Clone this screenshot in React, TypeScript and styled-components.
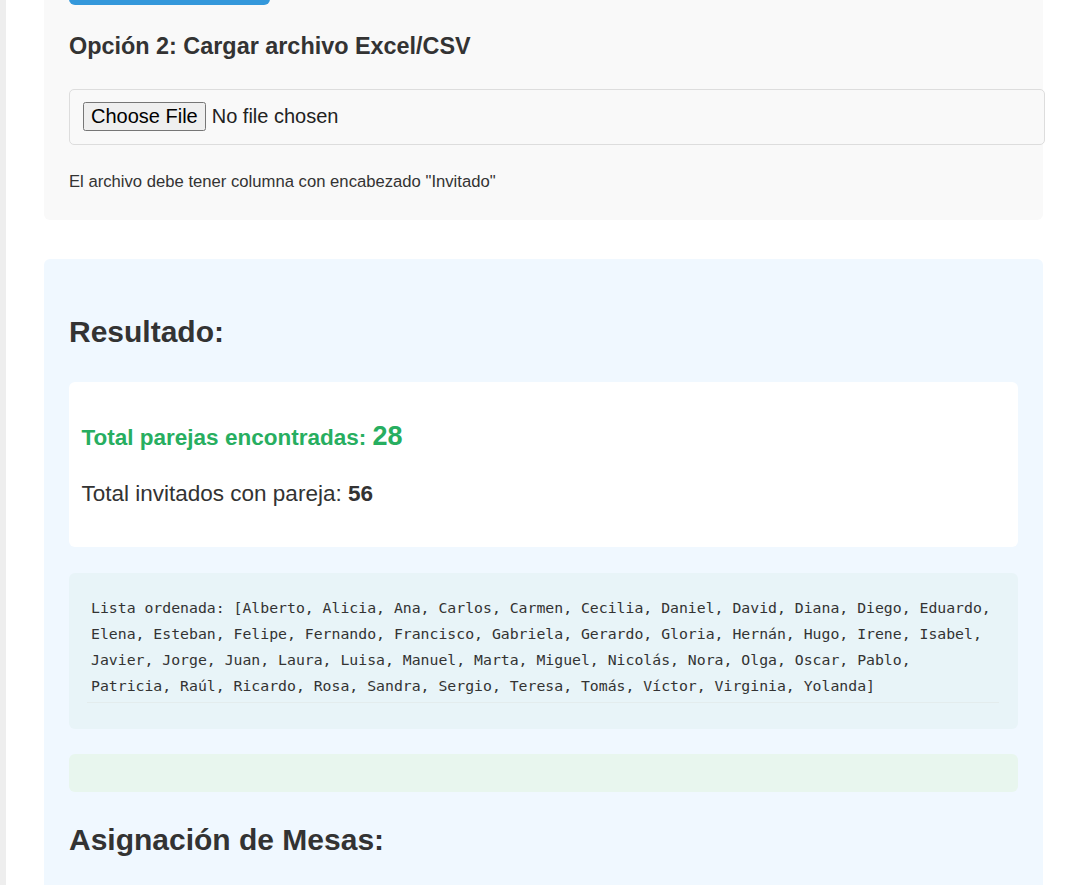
import React from "react";
import styled, { createGlobalStyle } from "styled-components";

const GlobalStyle = createGlobalStyle`
  html, body {
    margin: 0;
    padding: 0;
    background: #eeeeee;
    overflow: hidden;
  }
  body {
    font-family: "Liberation Sans", Arial, sans-serif;
    color: #333333;
  }
  * { box-sizing: content-box; }
`;

const Viewport = styled.div`
  width: 1065px;
  height: 885px;
  overflow: hidden;
  display: flex;
  padding-left: 6px;
  box-sizing: border-box;
`;

const Container = styled.main`
  flex: 1;
  background: #ffffff;
  padding: 0 22px 0 38px;
  margin-top: -65.5px;
  display: flex;
  flex-direction: column;
  gap: 39px;
  min-height: 1000px;
`;

const Panel = styled.section<{ $tone: "gray" | "blue" }>`
  background: ${(p) => (p.$tone === "gray" ? "#f9f9f9" : "#f0f8ff")};
  border-radius: 6px;
  padding: 25px;
  display: flex;
  flex-direction: column;
  align-items: flex-start;
`;

const PrimaryButton = styled.button`
  box-sizing: border-box;
  width: 201px;
  height: 45px;
  border: none;
  border-radius: 6px;
  background: #3498db;
  color: #ffffff;
  font-family: "Liberation Sans", Arial, sans-serif;
  font-size: 18px;
  line-height: 20px;
  padding: 0 0 25px;
  display: flex;
  align-items: flex-start;
  justify-content: center;
  overflow: hidden;
`;

const SectionTitle = styled.h3`
  margin: 28.9px 0 28.7px;
  font-size: 23.4px;
  line-height: 1.15;
  font-weight: bold;
  color: #333333;
`;

const FileInput = styled.input`
  display: block;
  width: 100%;
  margin: 0;
  padding: 12.5px;
  border: 1.25px solid #dddddd;
  border-radius: 5px;
  background: #f9f9f9;
  font-family: "Liberation Sans", Arial, sans-serif;
  font-size: 20px;
  line-height: normal;
  color: #222222;

  &::file-selector-button {
    font-family: "Liberation Sans", Arial, sans-serif;
    font-size: 20px;
    line-height: normal;
    color: #000000;
    background: #efefef;
    border: 1.25px solid #767676;
    border-radius: 2.5px;
    padding: 2px 7.5px;
    margin: 0 5.5px 0 0;
  }
`;

const Hint = styled.p`
  margin: 26.6px 0 4px;
  font-size: 16.67px;
  line-height: 1.15;
  color: #333333;
`;

const ResultTitle = styled.h2`
  margin: 31.4px 0 32.1px;
  font-size: 30px;
  line-height: 1.15;
  font-weight: bold;
  color: #333333;
`;

const StatsCard = styled.div`
  align-self: stretch;
  background: #ffffff;
  border-radius: 6px;
  padding: 12.5px;
  display: flex;
  flex-direction: column;
`;

const StatLine = styled.p<{ $accent?: boolean; $gap: number }>`
  margin: ${(p) => p.$gap}px 0 0;
  font-size: 22.5px;
  line-height: 1.15;
  color: ${(p) => (p.$accent ? "#27ae60" : "#333333")};
  font-weight: ${(p) => (p.$accent ? "bold" : "normal")};

  &:last-child {
    margin-bottom: 27.3px;
  }
`;

const Strong = styled.strong<{ $big?: boolean }>`
  font-weight: bold;
  font-size: ${(p) => (p.$big ? "1.2em" : "1em")};
  line-height: 1;
`;

const SortedListBox = styled.div`
  align-self: stretch;
  margin-top: 26px;
  background: #e8f4f8;
  border-radius: 6px;
  padding: 18px 19px 26px 18px;
`;

const SortedList = styled.pre`
  margin: 0;
  padding: 4px 4px 3px 4px;
  border-bottom: 1px solid #e3eced;
  font-family: "DejaVu Sans Mono", "Liberation Mono", monospace;
  font-size: 14.8px;
  line-height: 26px;
  color: #333333;
  white-space: pre;
  overflow: hidden;
`;

const AssignmentBox = styled.div`
  align-self: stretch;
  margin-top: 25px;
  height: 38px;
  background: #e8f6ee;
  border-radius: 6px;
`;

const sortedLines = [
  "Lista ordenada: [Alberto, Alicia, Ana, Carlos, Carmen, Cecilia, Daniel, David, Diana, Diego, Eduardo,",
  "Elena, Esteban, Felipe, Fernando, Francisco, Gabriela, Gerardo, Gloria, Hernán, Hugo, Irene, Isabel,",
  "Javier, Jorge, Juan, Laura, Luisa, Manuel, Marta, Miguel, Nicolás, Nora, Olga, Oscar, Pablo,",
  "Patricia, Raúl, Ricardo, Rosa, Sandra, Sergio, Teresa, Tomás, Víctor, Virginia, Yolanda]",
];

export default function App() {
  return (
    <>
      <GlobalStyle />
      <Viewport>
        <Container>
          <Panel $tone="gray">
            <PrimaryButton type="button">Procesar lista</PrimaryButton>
            <SectionTitle>Opción 2: Cargar archivo Excel/CSV</SectionTitle>
            <FileInput type="file" accept=".xlsx,.xls,.csv" />
            <Hint>El archivo debe tener columna con encabezado "Invitado"</Hint>
          </Panel>
          <Panel $tone="blue">
            <ResultTitle>Resultado:</ResultTitle>
            <StatsCard>
              <StatLine $accent $gap={28.8}>
                Total parejas encontradas: <Strong $big>28</Strong>
              </StatLine>
              <StatLine $gap={30.1}>
                Total invitados con pareja: <Strong>56</Strong>
              </StatLine>
            </StatsCard>
            <SortedListBox>
              <SortedList>{sortedLines.join("\n")}</SortedList>
            </SortedListBox>
            <AssignmentBox />
            <ResultTitle>Asignación de Mesas:</ResultTitle>
          </Panel>
        </Container>
      </Viewport>
    </>
  );
}
